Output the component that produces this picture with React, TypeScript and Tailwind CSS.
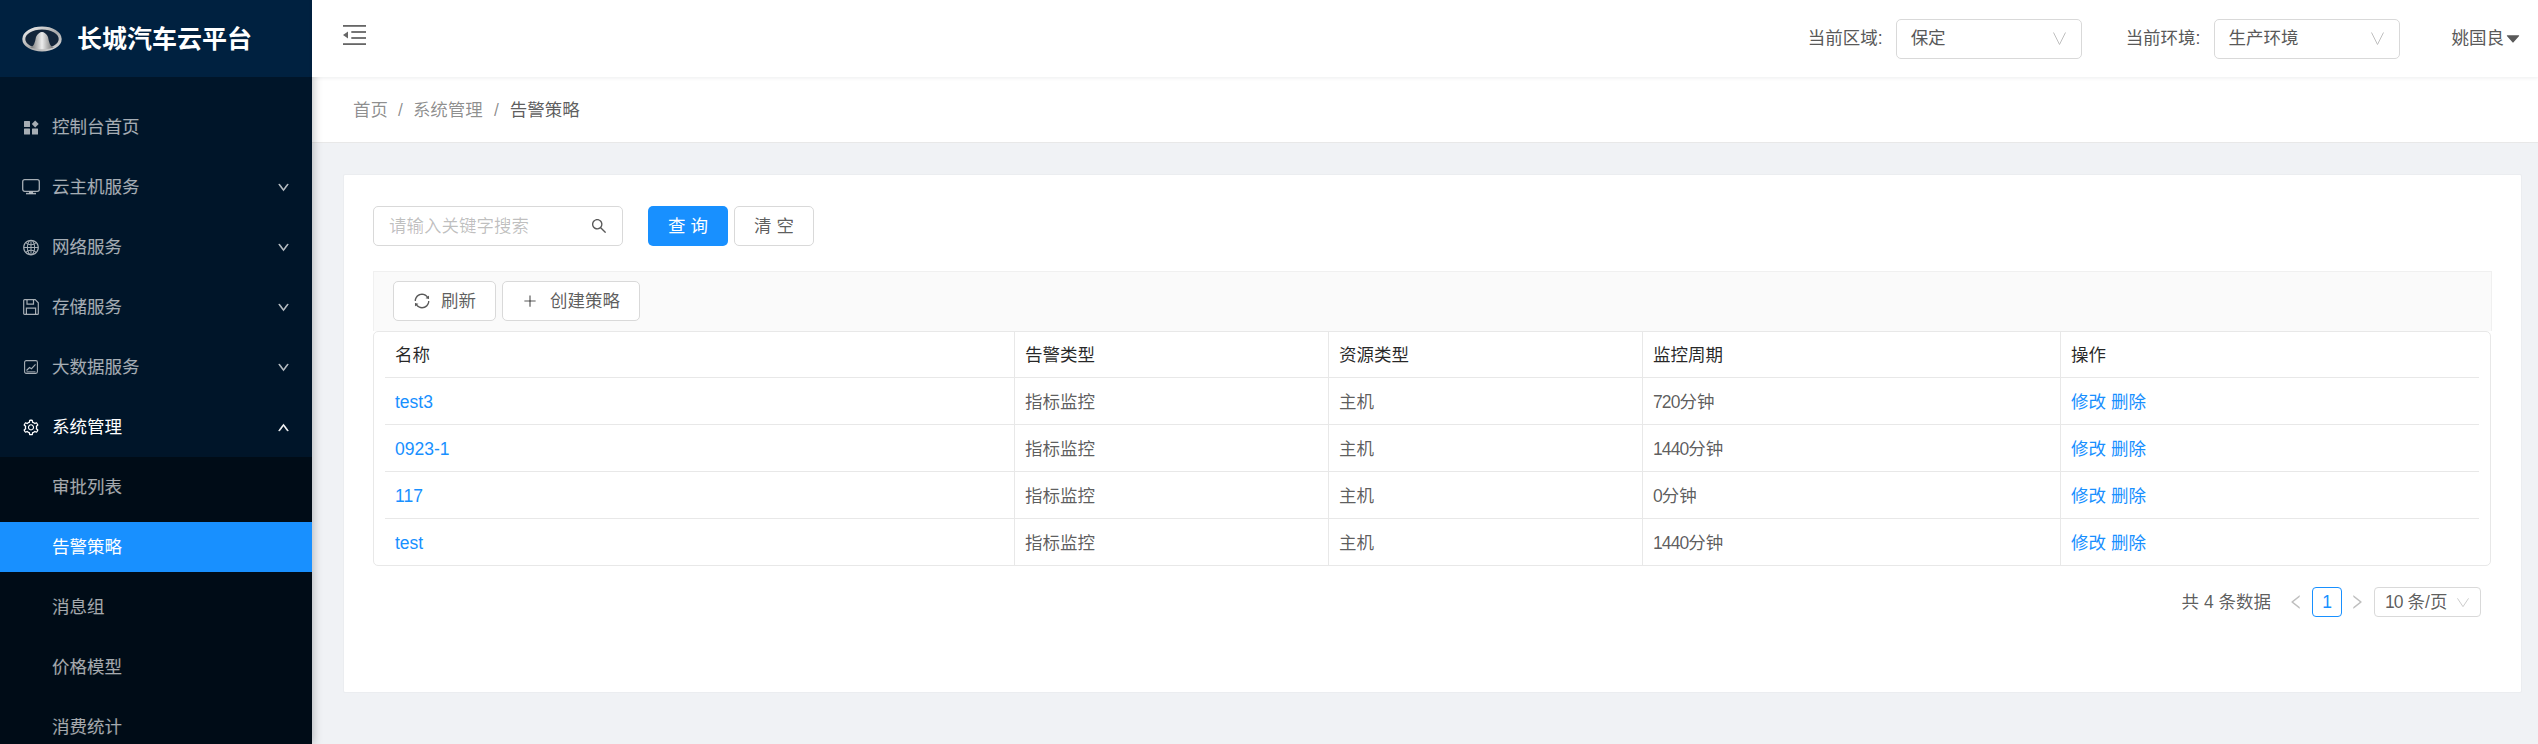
import {
  AiOutlineDown,
  AiOutlineGlobal,
  AiOutlineLeft,
  AiOutlinePlus,
  AiOutlineRight,
  AiOutlineSearch,
  AiOutlineSetting,
  AiOutlineSync,
  AiOutlineUp,
  AiFillCaretDown,
} from "react-icons/ai";
import type { ReactNode } from "react";

const rows = [
  { name: "test3", minutes: "720" },
  { name: "0923-1", minutes: "1440" },
  { name: "117", minutes: "0" },
  { name: "test", minutes: "1440" },
];

function DashIcon() {
  return (
    <svg viewBox="0 0 15 15" className="h-[15px] w-[15px]" fill="currentColor">
      <rect x="0" y="1" width="6" height="6" rx="0.5" />
      <rect x="0" y="8.5" width="6" height="6" rx="0.5" />
      <rect x="8" y="8.5" width="6" height="6" rx="0.5" />
      <path d="M11.2 0.6l3.5 3.4-3.5 3.4L7.8 4z" />
    </svg>
  );
}

function DesktopIcon() {
  return (
    <svg viewBox="0 0 18 16" className="h-[16px] w-[18px]" fill="none" stroke="currentColor" strokeWidth="1.3">
      <rect x="0.7" y="0.7" width="16.6" height="11.6" rx="2" />
      <path d="M4 14.6h10" strokeWidth="1.5" />
      <path d="M7 12.8h4v1.5H7z" fill="currentColor" stroke="none" />
    </svg>
  );
}

function SaveIcon() {
  return (
    <svg viewBox="0 0 16 16" className="h-[16px] w-[16px]" fill="none" stroke="currentColor" strokeWidth="1.2">
      <path d="M0.7 1.6c0-.5.4-.9.9-.9h10.6l3.1 3.1v10.6c0 .5-.4.9-.9.9H1.6c-.5 0-.9-.4-.9-.9z" />
      <path d="M4 1v4.2h6.5V1" />
      <path d="M3.4 15V9.2h9.2V15" />
    </svg>
  );
}

function ChartIcon() {
  return (
    <svg viewBox="0 0 14 14" className="h-[14px] w-[14px]" fill="none" stroke="currentColor" strokeWidth="1.1">
      <rect x="0.6" y="0.6" width="12.8" height="12.8" rx="1.6" />
      <path d="M2.5 10.5l3-3 2 1.2 4-4.4" />
      <path d="M2.5 11.8h9" strokeWidth="0.9" />
    </svg>
  );
}

function FoldIcon() {
  return (
    <svg viewBox="0 0 23 20" className="-mt-[8px] h-[20px] w-[23px] text-[#666]" fill="currentColor">
      <rect x="0" y="0" width="23" height="1.8" />
      <rect x="8.3" y="6.1" width="14.7" height="1.8" />
      <rect x="8.3" y="12.1" width="14.7" height="1.8" />
      <rect x="0" y="18.2" width="23" height="1.8" />
      <path d="M0 10l5-3.4v6.8z" />
    </svg>
  );
}

function VArrow({ className }: { className: string }) {
  return (
    <svg viewBox="0 0 13 13" preserveAspectRatio="none" className={className} fill="none" stroke="#bfbfbf" strokeWidth="1">
      <path d="M0.5 0.5l6 12 6-12" />
    </svg>
  );
}

function Logo() {
  return (
    <svg viewBox="0 0 40 26" className="h-[26px] w-[40px] shrink-0">
      <defs>
        <linearGradient id="ring" x1="0" y1="0" x2="1" y2="1">
          <stop offset="0" stopColor="#f0f0f0" />
          <stop offset="0.55" stopColor="#a8a8a8" />
          <stop offset="1" stopColor="#dcdcdc" />
        </linearGradient>
        <linearGradient id="shield" x1="0" y1="0" x2="1" y2="0">
          <stop offset="0" stopColor="#6f6f6f" />
          <stop offset="0.5" stopColor="#ececec" />
          <stop offset="1" stopColor="#6a6a6a" />
        </linearGradient>
      </defs>
      <ellipse cx="20" cy="13" rx="18.2" ry="11" fill="#14263a" stroke="url(#ring)" strokeWidth="3" />
      <path d="M8 21c4 0 5-5 6-10 1-3 4-5 6-5s5 2 6 5c1 5 2 10 6 10-4 3-20 3-24 0z" fill="url(#shield)" />
    </svg>
  );
}

function MenuItem({ icon, label, arrow, open }: { icon: ReactNode; label: string; arrow?: boolean; open?: boolean }) {
  return (
    <div className={`flex h-[60px] items-center px-[22px] ${open ? "text-white" : "text-white/65"}`}>
      <span className="flex w-[18px] justify-center text-[19px]">{icon}</span>
      <span className="ml-[12px] flex-1 text-[17.5px] leading-[25px]">{label}</span>
      {arrow && (open ? <AiOutlineUp className="stroke-[50] text-[13px]" /> : <AiOutlineDown className="stroke-[50] text-[13px]" />)}
    </div>
  );
}

function SubItem({ label, active }: { label: string; active?: boolean }) {
  return (
    <div className={`mb-[10px] flex h-[50px] items-center pl-[52px] text-[17.5px] leading-[25px] ${active ? "bg-[#1890ff] text-white" : "text-white/65"}`}>
      {label}
    </div>
  );
}

function Sidebar() {
  return (
    <aside className="z-10 flex h-[744px] w-[312px] shrink-0 flex-col overflow-hidden bg-[#001529] shadow-[2px_0_8px_rgba(29,35,41,0.25)]">
      <div className="flex h-[77px] shrink-0 items-center gap-[15px] bg-[#002140] pl-[22px]">
        <Logo />
        <span className="text-[25px] leading-[30px] font-bold text-white">长城汽车云平台</span>
      </div>
      <div className="pt-[20px]">
        <MenuItem icon={<DashIcon />} label="控制台首页" />
        <MenuItem icon={<DesktopIcon />} label="云主机服务" arrow />
        <MenuItem icon={<AiOutlineGlobal />} label="网络服务" arrow />
        <MenuItem icon={<SaveIcon />} label="存储服务" arrow />
        <MenuItem icon={<ChartIcon />} label="大数据服务" arrow />
        <MenuItem icon={<AiOutlineSetting />} label="系统管理" arrow open />
      </div>
      <div className="bg-[#000c17] pt-[5px]">
        <SubItem label="审批列表" />
        <SubItem label="告警策略" active />
        <SubItem label="消息组" />
        <SubItem label="价格模型" />
        <SubItem label="消费统计" />
      </div>
    </aside>
  );
}

function Select({ label, value }: { label: string; value: string }) {
  return (
    <div className="flex items-center text-[17.5px] text-[#595959]">
      <span className="mr-[13px] leading-[25px]">{label}</span>
      <div className="flex h-[40px] w-[186px] items-center justify-between rounded-[5px] border border-[#d9d9d9] pr-[15px] pl-[14px]">
        <span>{value}</span>
        <VArrow className="h-[13px] w-[13px]" />
      </div>
    </div>
  );
}

function Header() {
  return (
    <header className="relative z-20 flex h-[77px] shrink-0 items-center justify-between bg-white pr-[16px] pl-[31px] shadow-[0_1px_4px_rgba(0,21,41,0.08)]">
      <FoldIcon />
      <div className="flex items-center">
        <Select label="当前区域:" value="保定" />
        <div className="w-[44px]" />
        <Select label="当前环境:" value="生产环境" />
        <div className="ml-[52px] flex items-center text-[17.5px] text-[#595959]">
          姚国良
          <AiFillCaretDown className="text-[18px]" />
        </div>
      </div>
    </header>
  );
}

function Breadcrumb() {
  return (
    <div className="flex h-[66px] shrink-0 items-center border-b border-[#e8e8e8] bg-white pt-[2px] pl-[41px] text-[17.5px] text-black/45">
      <span>首页</span>
      <span className="mx-[10px]">/</span>
      <span>系统管理</span>
      <span className="mx-[11px]">/</span>
      <span className="text-black/65">告警策略</span>
    </div>
  );
}

function Btn({ children, className }: { children: ReactNode; className: string }) {
  return (
    <div className={`flex h-[40px] items-center justify-center rounded-[5px] text-[17.5px] ${className}`}>
      {children}
    </div>
  );
}

function Cell({ children, className = "" }: { children: ReactNode; className?: string }) {
  return <div className={`flex items-center border-[#e8e8e8] pt-[2px] pl-[10px] ${className}`}>{children}</div>;
}

function PolicyTable() {
  return (
    <div className="w-[2118px] rounded-[5px] border border-[#e8e8e8] bg-white px-[11px] text-[17.5px] text-black/65">
      <div className="grid grid-cols-[629px_314px_314px_418px_1fr]">
        {["名称", "告警类型", "资源类型", "监控周期", "操作"].map((title, i) => (
          <Cell key={title} className={`h-[46px] border-b text-black/85 ${i > 0 ? "border-l" : ""}`}>
            {title}
          </Cell>
        ))}
        {rows.map((row, r) => {
          const rowClass = r === 3 ? "h-[46px]" : "h-[47px] border-b";
          return (
            <div key={row.name} className="contents">
              <Cell className={`text-[#1890ff] ${rowClass}`}>{row.name}</Cell>
              <Cell className={`border-l ${rowClass}`}>指标监控</Cell>
              <Cell className={`border-l ${rowClass}`}>主机</Cell>
              <Cell className={`border-l ${rowClass}`}>
                <span className="tracking-[-0.9px]">{row.minutes}</span>
                <span>分钟</span>
              </Cell>
              <Cell className={`gap-[5px] border-l text-[#1890ff] ${rowClass}`}>
                <span>修改</span>
                <span>删除</span>
              </Cell>
            </div>
          );
        })}
      </div>
    </div>
  );
}

function Pagination() {
  return (
    <div className="mt-[21px] flex items-center justify-end pr-[11px] text-[17.5px] text-black/65">
      <span>共 4 条数据</span>
      <AiOutlineLeft className="ml-[16px] text-[18px] text-[#bfbfbf]" />
      <div className="ml-[7px] flex h-[30px] w-[30px] items-center justify-center rounded-[4px] border border-[#1890ff] text-[#1890ff]">1</div>
      <AiOutlineRight className="ml-[6px] text-[18px] text-[#bfbfbf]" />
      <div className="ml-[8px] flex h-[30px] w-[107px] items-center justify-between rounded-[4px] border border-[#d9d9d9] pr-[11px] pl-[10px]">
        <span>
          <span className="tracking-[-0.9px]">10</span> 条/页
        </span>
        <VArrow className="h-[9px] w-[12px]" />
      </div>
    </div>
  );
}

export default function App() {
  return (
    <div className="flex h-[744px] w-[2538px] overflow-hidden bg-[#f0f2f5] font-['Liberation_Sans','Noto_Sans_CJK_SC',sans-serif]">
      <Sidebar />
      <main className="flex min-w-0 flex-1 flex-col">
        <Header />
        <Breadcrumb />
        <div className="px-[31px] pt-[31px]">
          <div className="h-[519px] w-[2179px] rounded-[2px] border border-[#ebedf0] bg-white px-[29px] pt-[31px]">
            <div className="flex items-center">
              <div className="flex h-[40px] w-[250px] items-center justify-between rounded-[5px] border border-[#d9d9d9] pr-[14px] pl-[15px] text-[17.5px] text-black/25">
                <span>请输入关键字搜索</span>
                <AiOutlineSearch className="text-[18px] text-[#595959]" />
              </div>
              <Btn className="ml-[25px] w-[80px] bg-[#1890ff] pl-[5px] tracking-[5px] text-white">查询</Btn>
              <Btn className="ml-[6px] w-[80px] border border-[#d9d9d9] pl-[5px] tracking-[5px] text-black/65">清空</Btn>
            </div>
            <div className="mt-[25px] w-[2119px]">
              <div className="flex h-[60px] items-start gap-[6px] border border-b-0 border-[#f0f0f0] bg-[#fafafa] pt-[9px] pl-[19px]">
                <Btn className="w-[103px] gap-[10px] border border-[#d9d9d9] bg-white text-black/65">
                  <AiOutlineSync className="text-[18px]" />
                  刷新
                </Btn>
                <Btn className="w-[138px] gap-[12px] border border-[#d9d9d9] bg-white text-black/65">
                  <AiOutlinePlus className="text-[16px]" />
                  创建策略
                </Btn>
              </div>
              <PolicyTable />
            </div>
            <Pagination />
          </div>
        </div>
      </main>
    </div>
  );
}
